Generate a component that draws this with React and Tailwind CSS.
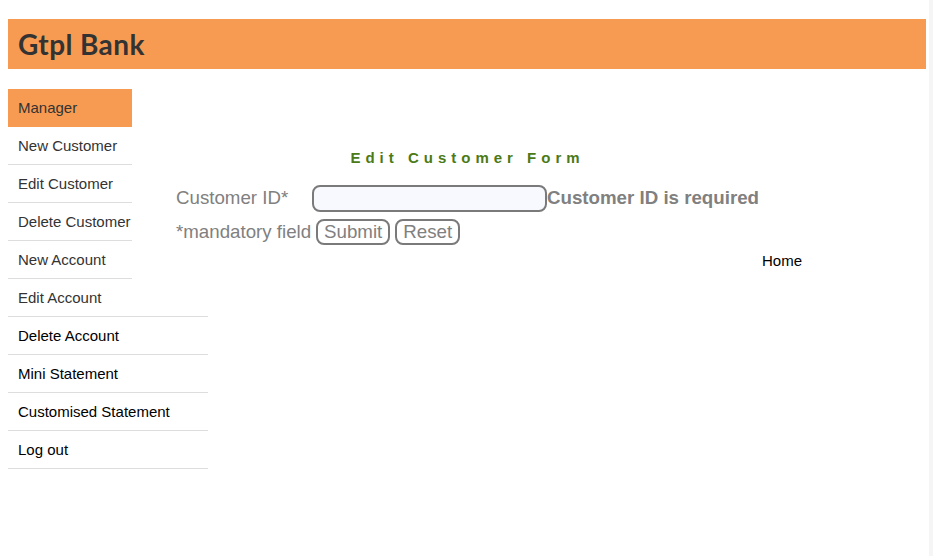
import React from 'react';

const menuItems = [
  { label: 'New Customer', wide: false },
  { label: 'Edit Customer', wide: false },
  { label: 'Delete Customer', wide: false },
  { label: 'New Account', wide: false },
  { label: 'Edit Account', wide: true, dim: true },
  { label: 'Delete Account', wide: true },
  { label: 'Mini Statement', wide: true },
  { label: 'Customised Statement', wide: true },
  { label: 'Log out', wide: true },
];

const App = () => {
  return (
    <div className="flex min-h-screen bg-white" style={{ fontFamily: '"Liberation Sans", Arial, sans-serif' }}>
      <div className="flex-1 pl-[8px] pt-[19px]">
        <header className="w-[918px] h-[50px] bg-[#f89b52] flex items-center pl-[10px]">
          <h1 className="text-[28px] font-bold text-[#333333] tracking-[0.4px] mt-[-1px]" style={{ fontFamily: 'Lato, "Noto Sans", sans-serif' }}>
            Gtpl Bank
          </h1>
        </header>

        <div className="flex mt-[20px]">
          {/* sidebar */}
          <ul className="w-[124px] shrink-0 flex flex-col">
            <li className="w-[124px] h-[38px] bg-[#f89b52] text-[#333333] text-[15px] flex items-center pl-[10px] pt-[2px] border-b border-[#f89b52]">
              Manager
            </li>
            {menuItems.map((item) => (
              <li
                key={item.label}
                className={
                  item.wide
                    ? item.dim
                      ? 'w-[200px] h-[38px] text-[15px] text-[#333333] flex items-center pl-[10px] pt-[2px] border-b border-[#dddddd]'
                      : 'w-[200px] h-[38px] text-[15px] text-black flex items-center pl-[10px] pt-[2px] border-b border-[#dddddd]'
                    : 'w-[124px] h-[38px] text-[15px] text-[#333333] flex items-center pl-[10px] pt-[2px] border-b border-[#dddddd]'
                }
              >
                <span className="whitespace-nowrap">{item.label}</span>
              </li>
            ))}
          </ul>

          {/* form */}
          <div className="pl-[44px] pt-[59px]">
            <div className="w-[583px] text-center">
              <h2 className="text-[15px] font-bold text-[#4b7a17] tracking-[5px] leading-[20px]">Edit Customer Form</h2>
            </div>
            <div className="flex items-center mt-[16px] h-[28px]">
              <span className="w-[136px] text-[18.72px] text-[#808080]">Customer ID*</span>
              <input
                type="text"
                className="w-[235px] h-[27px] rounded-[8px] border-2 border-[#7a7a7a] bg-[#f8f9ff] outline-none"
              />
              <span className="text-[18.72px] font-bold text-[#808080] whitespace-nowrap">Customer ID is required</span>
            </div>
            <div className="flex items-center mt-[7px] h-[26px]">
              <span className="text-[18.72px] text-[#808080] whitespace-nowrap">*mandatory field</span>
              <button className="ml-[5px] w-[74px] h-[26px] rounded-[8px] border-2 border-[#7a7a7a] bg-white text-[18.72px] text-[#808080] leading-none">
                Submit
              </button>
              <button className="ml-[5px] w-[65px] h-[26px] rounded-[8px] border-2 border-[#7a7a7a] bg-white text-[18.72px] text-[#808080] leading-none">
                Reset
              </button>
            </div>
            <div className="mt-[4px] pl-[586px]">
              <a className="text-[15px] text-black">Home</a>
            </div>
          </div>
        </div>
      </div>
      <div className="w-[4px] bg-[#f5f5f5]" />
    </div>
  );
};

export default App;
